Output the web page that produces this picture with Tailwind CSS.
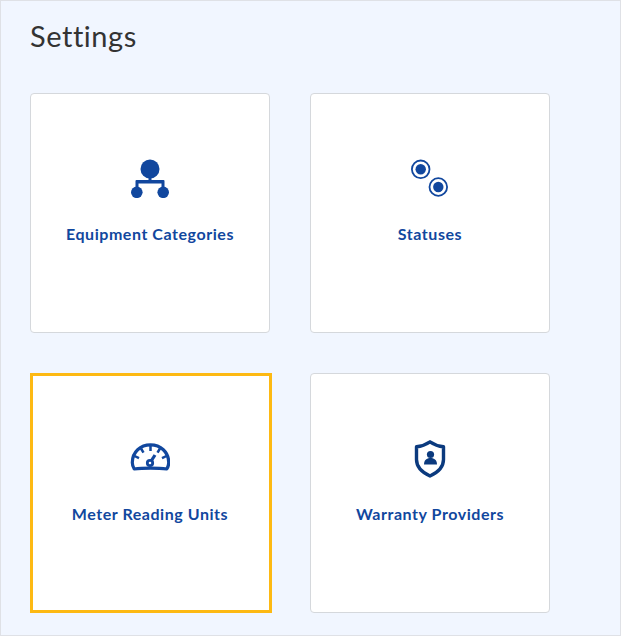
<!DOCTYPE html>
<html>
<head>
<meta charset="utf-8">
<script src="https://cdn.jsdelivr.net/npm/@tailwindcss/browser@4"></script>
</head>
<body class="m-0">
<div class="w-[621px] h-[636px] overflow-hidden border border-[#dfe1e6] bg-[#f1f6ff] pl-[29px] pt-[18px] font-['Lato','Open_Sans',sans-serif]">
  <h1 class="m-0 h-[34px] text-[29px] leading-[34px] font-normal text-[#333333] tracking-[0.55px]">Settings</h1>
  <div class="mt-[40px] grid grid-cols-[240px_240px] grid-rows-[240px_240px] gap-x-[40px] gap-y-[40px]">
    <div class="box-border w-[240px] h-[240px] flex flex-col items-center rounded-[4px] border border-[#d5d8dc] bg-white pt-[64px]">
      <svg class="w-[40px] h-[40px]" viewBox="0 0 40 40" fill="#11479e">
        <circle cx="20" cy="11" r="9.500"/>
        <rect x="18.500" y="19" width="3" height="4"/>
        <path d="M5.500 32v-9a1 1 0 0 1 1-1h27a1 1 0 0 1 1 1v9h-3v-6.500H8.500V32z"/>
        <circle cx="6.800" cy="34.300" r="5.800"/>
        <circle cx="33.200" cy="34.300" r="5.800"/>
      </svg>
      <div class="mt-[26px] text-[16px] leading-[20px] font-bold text-[#11479e] tracking-[0.55px]">Equipment Categories</div>
    </div>
    <div class="box-border w-[240px] h-[240px] flex flex-col items-center rounded-[4px] border border-[#d5d8dc] bg-white pt-[64px]">
      <svg class="w-[40px] h-[40px]" viewBox="0 0 40 40" fill="#11479e">
        <circle cx="10.700" cy="11.300" r="8.800" fill="none" stroke="#11479e" stroke-width="1.800"/>
        <circle cx="10.700" cy="11.300" r="5.200"/>
        <circle cx="28.300" cy="29" r="8.800" fill="none" stroke="#11479e" stroke-width="1.800"/>
        <circle cx="28.300" cy="29" r="5.200"/>
      </svg>
      <div class="mt-[26px] text-[16px] leading-[20px] font-bold text-[#11479e] tracking-[0.55px]">Statuses</div>
    </div>
    <div class="box-border w-[242px] h-[240px] flex flex-col items-center border-[3px] border-[#fdb913] bg-white pt-[62px] pr-[2px]">
      <svg class="w-[40px] h-[40px]" viewBox="0 0 40 40" fill="none" stroke="#11479e">
        <path d="M4.200 31C2.800 28.800 2.300 26.500 2.300 24.500 2.300 14 10.500 6.800 20.500 6.800s18.200 7.200 18.200 17.700c0 2-.5 4.300-1.900 6.500-5-.7-10.800-.9-16.300-.9s-11.300.2-16.300.9z" stroke-width="3.200" stroke-linejoin="round"/>
        <path d="M20.500 8v5M11 10.500l2.500 4.200M30 10.500l-2.500 4.200M4.500 18l4.500 2.200M36.500 18l-4.500 2.200" stroke-width="2.500"/>
        <circle cx="20" cy="25" r="2.700" stroke-width="2.800"/>
        <path d="M21.500 22.500l3.500-5.500" stroke-width="3.200"/>
      </svg>
      <div class="mt-[26px] text-[16px] leading-[20px] font-bold text-[#11479e] tracking-[0.55px]">Meter Reading Units</div>
    </div>
    <div class="box-border w-[240px] h-[240px] flex flex-col items-center rounded-[4px] border border-[#d5d8dc] bg-white pt-[64px]">
      <svg class="w-[40px] h-[40px]" viewBox="0 0 40 40">
        <path d="M20 3.800C24 6.500 28.800 8.300 33.500 8.800v12.700c0 7.500-5.800 13-13.500 16.500-7.700-3.500-13.500-9-13.500-16.500V8.800c4.700-.5 9.500-2.300 13.500-5z" fill="none" stroke="#0b3a7e" stroke-width="3.400" stroke-linejoin="round"/>
        <circle cx="20.500" cy="16.500" r="3.600" fill="#0b3a7e"/>
        <path d="M14 26.500c0-4.200 2.500-6.500 6.500-6.500s6.500 2.300 6.500 6.500z" fill="#0b3a7e"/>
      </svg>
      <div class="mt-[26px] text-[16px] leading-[20px] font-bold text-[#11479e] tracking-[0.55px]">Warranty Providers</div>
    </div>
  </div>
</div>
</body>
</html>
